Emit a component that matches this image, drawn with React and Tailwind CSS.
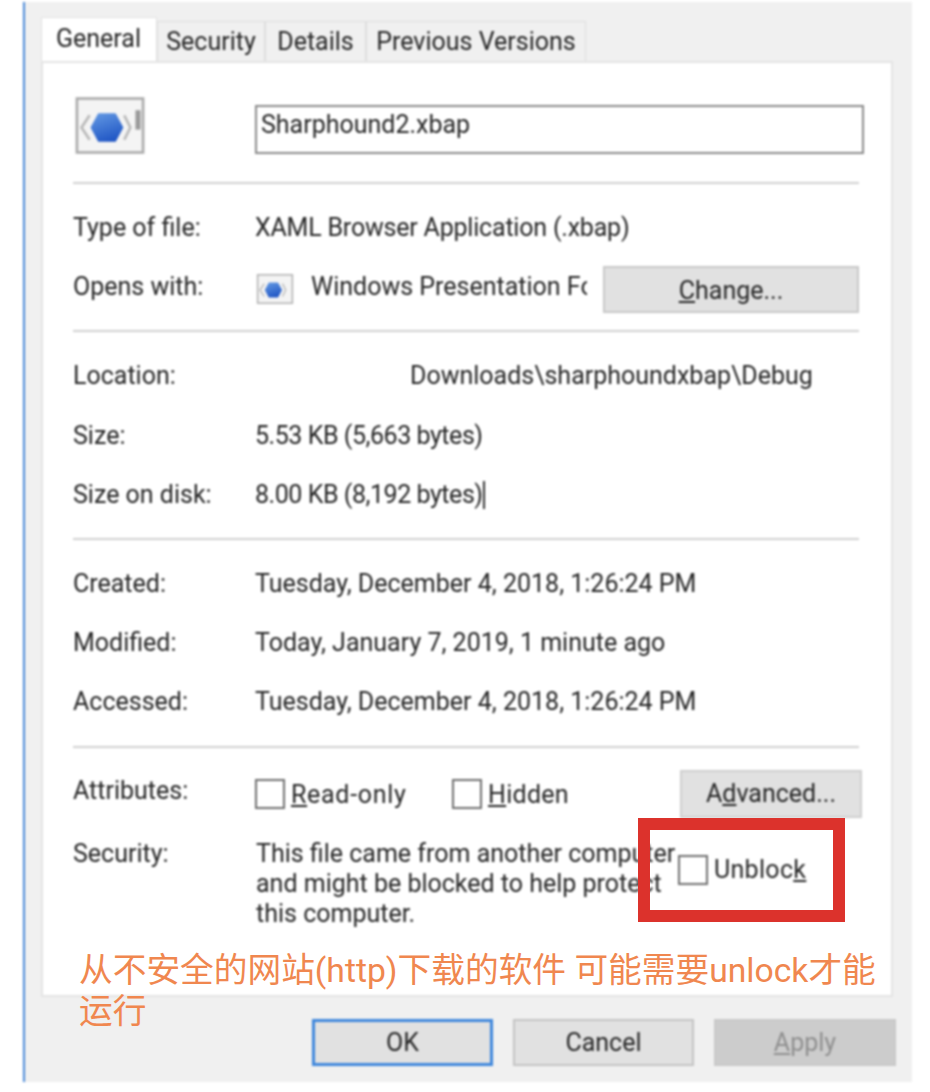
import React from "react";

function AppIcon({ small }) {
  const id = small ? "hs" : "hb";
  return (
    <svg viewBox="0 0 68 56" className={small ? "w-[40px] h-[30px]" : "w-[70px] h-[57px]"}>
      <defs>
        <linearGradient id={id} x1="0.3" y1="0" x2="0.7" y2="1">
          <stop offset="0" stopColor="#5c92e0" />
          <stop offset="1" stopColor="#1f55c4" />
        </linearGradient>
      </defs>
      <rect x="1.5" y="1.5" width="65" height="53" fill="#f4f4f4" stroke="#a9a9a9" strokeWidth="2.5" />
      <path d="M14 18 L6 30 L14 42" fill="none" stroke="#b8b8b8" strokeWidth="2.5" />
      <path d="M48 18 L54 30 L48 42" fill="none" stroke="#b8b8b8" strokeWidth="2.5" />
      <path d="M23 17 H39 L46 30 L39 43 H23 L16 30 Z" fill={`url(#${id})`} stroke={`url(#${id})`} strokeWidth="2" strokeLinejoin="round" />
      {!small && <rect x="59" y="13" width="5" height="19" fill="#9a9a9a" />}
    </svg>
  );
}

function Hr() {
  return <div className="h-[2px] bg-[#d0d0d0]" />;
}

function Row({ label, children }) {
  return (
    <div className="h-[59px] flex items-center">
      <div className="w-[182px] shrink-0">{label}</div>
      {children}
    </div>
  );
}

function Check({ label, className }) {
  return (
    <div className="flex items-center gap-[6px]">
      <div className="w-[30px] h-[30px] border-2 border-[#6f6f6f] bg-white" />
      <span className={"pt-[1px] " + (className || "")}>{label}</span>
    </div>
  );
}

function Btn({ className, children }) {
  return (
    <div className={"flex items-center justify-center border-2 " + className}>{children}</div>
  );
}

const tabClass = "h-[40px] flex items-center justify-center border border-b-0 border-[#dedede] bg-[#f0f0f0]";

export default function App() {
  return (
    <div className="relative w-[930px] h-[1092px] bg-white overflow-hidden font-['Roboto','Noto_Sans_CJK_SC',sans-serif]">
      <div className="ml-[23px] mt-[2px] w-[889px] h-[1080px] bg-[#f0f0f0] border-l-2 border-[#4a8ad8] pt-[15px] pl-[16px] pr-[19px] text-[25px] leading-[30px] text-[#262626] blur-[1px]">
        <div className="flex items-end h-[44px]">
          <div className="w-[116px] h-[44px] bg-white border border-b-0 border-[#e2e2e2] flex items-start pt-[6px] pl-[14px]">General</div>
          <div className={"w-[108px] " + tabClass}>Security</div>
          <div className={"w-[101px] " + tabClass}>Details</div>
          <div className={"w-[220px] " + tabClass}>Previous Versions</div>
        </div>
        <div className="h-[936px] bg-white border-2 border-[#e4e4e4] pl-[30px] pr-[32px] pt-[34px]">
          <div className="flex h-[57px] items-start">
            <div className="w-[182px] shrink-0 pl-[2px]"><AppIcon /></div>
            <div className="mt-[8px] h-[49px] flex-1 -mr-[5px] border-2 border-[#8a8a8a] pl-[4px] pt-[3px]">Sharphound2.xbap</div>
          </div>
          <div className="mt-[28px]"><Hr /></div>

          <div className="mt-[14px]">
            <Row label="Type of file:"><span className="tracking-[-0.2px]">XAML Browser Application (.xbap)</span></Row>
            <Row label="Opens with:">
              <div className="w-[56px] shrink-0 mt-[4px]"><AppIcon small /></div>
              <div className="w-[276px] shrink-0 overflow-hidden whitespace-nowrap">Windows Presentation Fo</div>
              <Btn className="ml-[16px] w-[256px] h-[47px] mt-[5px] pt-[3px] bg-[#e1e1e1] border-[#c8c8c8]"><span><span className="underline">C</span>hange...</span></Btn>
            </Row>
          </div>
          <div className="mt-[14px]"><Hr /></div>

          <div className="mt-[14px]">
            <Row label="Location:"><span className="pl-[155px]">Downloads\sharphoundxbap\Debug</span></Row>
            <div className="h-[1px]" />
            <Row label="Size:"><span className="tracking-[-0.45px]">5.53 KB (5,663 bytes)</span></Row>
            <Row label="Size on disk:"><span className="tracking-[-0.45px]">8.00 KB (8,192 bytes)</span><span className="w-[2px] h-[28px] bg-[#333]" /></Row>
          </div>
          <div className="mt-[14px]"><Hr /></div>

          <div className="mt-[14px]">
            <Row label="Created:"><span>Tuesday, December 4, 2018, 1:26:24 PM</span></Row>
            <Row label="Modified:"><span>Today, January 7, 2019, 1 minute ago</span></Row>
            <Row label="Accessed:"><span>Tuesday, December 4, 2018, 1:26:24 PM</span></Row>
          </div>
          <div className="mt-[15px]"><Hr /></div>

          <div className="mt-[22px] h-[48px] flex items-center -mr-[3px]">
            <div className="w-[182px] shrink-0 -mt-[6px]">Attributes:</div>
            <div className="w-[197px] shrink-0"><Check className="tracking-[0.7px]" label={<><span className="underline">R</span>ead-only</>} /></div>
            <Check className="tracking-[0.3px]" label={<><span className="underline">H</span>idden</>} />
            <Btn className="ml-auto w-[182px] h-[48px] bg-[#e1e1e1] border-[#cfcfcf]"><span>A<span className="underline">d</span>vanced...</span></Btn>
          </div>

          <div className="mt-[21px] flex items-start">
            <div className="w-[183px] shrink-0">Security:</div>
            <div className="w-[422px] shrink-0">This file came from another computer and might be blocked to help protect this computer.</div>
            <div className="mt-[15px]"><Check className="tracking-[0.3px]" label={<>Unbloc<span className="underline">k</span></>} /></div>
          </div>
        </div>

        <div className="mt-[22px] flex justify-end gap-[20px] -mr-[3px]">
          <Btn className="w-[181px] h-[47px] bg-[#e1e1e1] border-[3px] border-[#3f87dc]">OK</Btn>
          <Btn className="w-[181px] h-[47px] bg-[#e1e1e1] border-[#c4c4c4]">Cancel</Btn>
          <Btn className="w-[182px] h-[47px] bg-[#cccccc] border-[#c8c8c8] text-[#8f8f8f]"><span><span className="underline">A</span>pply</span></Btn>
        </div>
      </div>

      <div className="absolute left-[638px] top-[818px] w-[207px] h-[104px] border-[12px] border-[#dc322c]" />
      <div className="absolute left-[79px] top-[950px] w-[810px] text-[33.7px] leading-[41px] text-[#f0874f]">
        <div>从不安全的网站(http)下载的软件 可能需要unlock才能</div>
        <div className="w-fit">运行</div>
      </div>
    </div>
  );
}
